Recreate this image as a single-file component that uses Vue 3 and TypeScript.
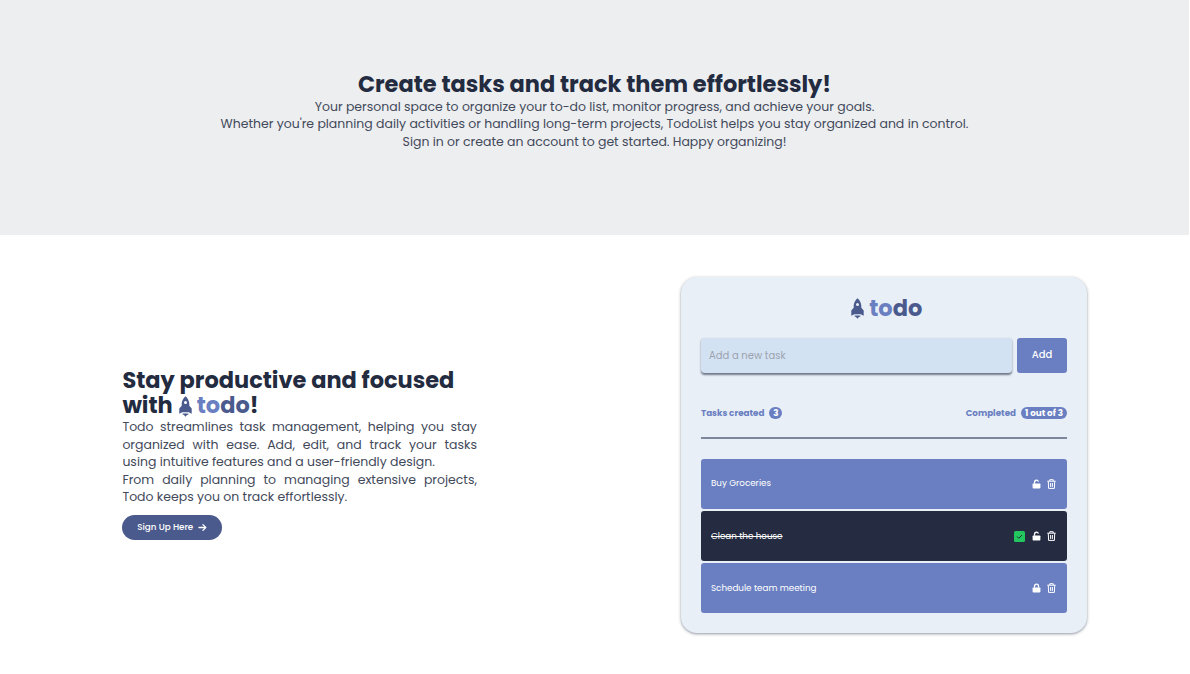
<script setup lang="ts">
interface Task { title: string; done: boolean; locked: boolean }
const tasks: Task[] = [
  { title: 'Buy Groceries', done: false, locked: false },
  { title: 'Clean the house', done: true, locked: false },
  { title: 'Schedule team meeting', done: false, locked: true },
]
const intro: string[] = [
  'Your personal space to organize your to-do list, monitor progress, and achieve your goals.',
  "Whether you're planning daily activities or handling long-term projects, TodoList helps you stay organized and in control.",
  'Sign in or create an account to get started. Happy organizing!',
]
const rocket = 'M6.500.3C4.300 2.200 2.700 4.900 2.700 8v1.800L.3 12.600v5.200l3-1.500h6.400l3 1.500v-5.200L10.300 9.800V8C10.300 4.900 8.700 2.200 6.500.3zm0 4.800a1.500 1.500 0 1 1 0 3 1.500 1.500 0 0 1 0-3zM3.700 17.600h5.600v1.200H8.200L6.500 20.700 4.800 18.800H3.700z'
</script>

<template>
  <main class="page">
    <section class="hero">
      <h1>Create tasks and track them effortlessly!</h1>
      <p v-for="line in intro" :key="line">{{ line }}</p>
    </section>
    <section class="feature">
      <div class="pitch">
        <h2>
          <span class="line">Stay productive and focused</span>
          <span class="line"><span>with</span>
            <svg class="rocket" viewBox="0 0 13 21"><path :d="rocket" fill="#4b5a8d" fill-rule="evenodd" /></svg>
            <span class="brand"><i>to</i><b>do</b>!</span></span>
        </h2>
        <p class="full">Todo streamlines task management, helping you stay</p>
        <p class="full">organized with ease. Add, edit, and track your tasks</p>
        <p>using intuitive features and a user-friendly design.</p>
        <p class="full">From daily planning to managing extensive projects,</p>
        <p>Todo keeps you on track effortlessly.</p>
        <button class="signup"><span>Sign Up Here</span>
          <svg viewBox="0 0 9 9"><path d="M1 4.500h6.800M4.900 1.600L7.800 4.500 4.900 7.400" fill="none" stroke="#fff" stroke-width="1.300" stroke-linecap="round" stroke-linejoin="round" /></svg>
        </button>
      </div>
      <div class="card">
        <div class="logo">
          <svg class="rocket" viewBox="0 0 13 21"><path :d="rocket" fill="#4b5a8d" fill-rule="evenodd" /></svg>
          <span class="brand"><i>to</i><b>do</b></span>
        </div>
        <div class="entry">
          <div class="field">Add a new task</div>
          <button class="add">Add</button>
        </div>
        <div class="stats">
          <div class="stat"><span>Tasks created</span><span class="pill one">3</span></div>
          <div class="stat"><span>Completed</span><span class="pill">1 out of 3</span></div>
        </div>
        <ul>
          <li v-for="task in tasks" :key="task.title" :class="{ done: task.done }">
            <span class="title">{{ task.title }}</span>
            <svg v-if="task.done" class="check" viewBox="0 0 11 11"><rect width="11" height="11" rx="1.500" fill="#22c55e" /><path d="M3 5.500l1.800 1.800L8 4" fill="none" stroke="#252b40" stroke-width="1" /></svg>
            <svg class="lock" viewBox="0 0 9 10"><rect x=".6" y="4.400" width="7.800" height="5.100" rx=".8" fill="#fff" /><path :d="task.locked ? 'M2.500 4.800V3.200a2 2 0 0 1 4 0v1.600' : 'M2.500 4.800V3.200a2 2 0 0 1 3.900-.6'" fill="none" stroke="#fff" stroke-width="1.300" /></svg>
            <svg class="trash" viewBox="0 0 9 10"><path d="M.3 2.200h8.400M2.800 2V.7h3.400V2M1.300 2.400l.3 7h5.800l.3-7M3.600 4v3.900M5.400 4v3.900" fill="none" stroke="#fff" stroke-width="1" /></svg>
          </li>
        </ul>
      </div>
    </section>
  </main>
</template>

<style>
body { background: #fff; }
</style>
<style scoped>
* { box-sizing: border-box; }
.page { width: 1190px; height: 674px; overflow: hidden; font-family: Poppins, "Liberation Sans", sans-serif; color: #232b40; white-space: nowrap; }
h1, h2, p, ul { margin: 0; padding: 0; }
button { border: 0; padding: 0; font: inherit; color: #fff; }
.hero { width: 1189px; height: 235px; padding-top: 72.300px; background: #edeef0; text-align: center; }
h1, h2 { font-size: 22.480px; line-height: 25px; font-weight: 700; }
p { font-size: 12.480px; line-height: 17.500px; }
.hero p, .pitch p { color: #42495a; }
.hero h1 + p { margin-top: .3px; }
.feature { display: flex; height: 439px; }
.pitch { width: 354.500px; margin: 133px 0 0 122.400px; }
.line { display: flex; align-items: center; height: 25px; }
.rocket { width: 13px; height: 21px; margin: 2px 5px 0 6px; flex: none; }
.brand i { font-style: normal; color: #6a7fc1; }
.brand b { font-weight: inherit; color: #4b5a8d; }
.full { text-align-last: justify; }
.signup { display: flex; align-items: center; justify-content: center; gap: 5px; width: 99.600px; height: 25px; margin-top: 9.500px; border-radius: 13px; background: #4b5a8d; font-size: 8.750px; font-weight: 500; }
.signup svg { width: 9px; height: 9px; }
.card { width: 406px; height: 356.500px; margin: 41.500px 0 0 204.100px; padding: 18.500px 20px 0; border-radius: 16px; background: #e8eff7; box-shadow: 0 1px 3px rgba(35, 43, 64, .5); }
.logo { display: flex; justify-content: center; align-items: center; height: 25px; font-size: 22.500px; font-weight: 700; }
.logo .rocket { margin-left: 5.500px; }
.entry { display: flex; gap: 5px; margin-top: 17.600px; height: 35px; }
.field { width: 311px; padding-left: 8px; border-radius: 4px; background: #d3e2f2; box-shadow: 0 1.500px 2px rgba(35, 43, 64, .6); color: #9ba3af; font-size: 10px; line-height: 35px; }
.add { width: 50px; border-radius: 3px; background: #6a7fc1; font-size: 10px; font-weight: 500; }
.stats { display: flex; justify-content: space-between; margin-top: 34.400px; height: 32px; border-bottom: 2px solid #7d879b; color: #6a7fc1; font-size: 8.750px; font-weight: 700; }
.stat { display: flex; align-items: center; gap: 5px; height: 13px; }
.pill { width: 46px; height: 12px; line-height: 12px; border-radius: 6px; background: #6a7fc1; color: #fff; text-align: center; }
.pill.one { width: 13px; }
ul { margin-top: 20px; list-style: none; display: grid; gap: 2.500px; }
li { display: flex; align-items: center; height: 49.700px; padding: 0 11px 0 10px; border-radius: 3px; background: #6a7fc1; color: #fff; font-size: 8.750px; }
li.done { background: #252b40; }
.done .title { text-decoration: line-through; }
.title { margin-right: auto; }
.check { width: 11px; height: 11px; margin-right: 7px; }
.lock, .trash { width: 9px; height: 10px; }
.lock { margin-right: 6px; }
</style>
